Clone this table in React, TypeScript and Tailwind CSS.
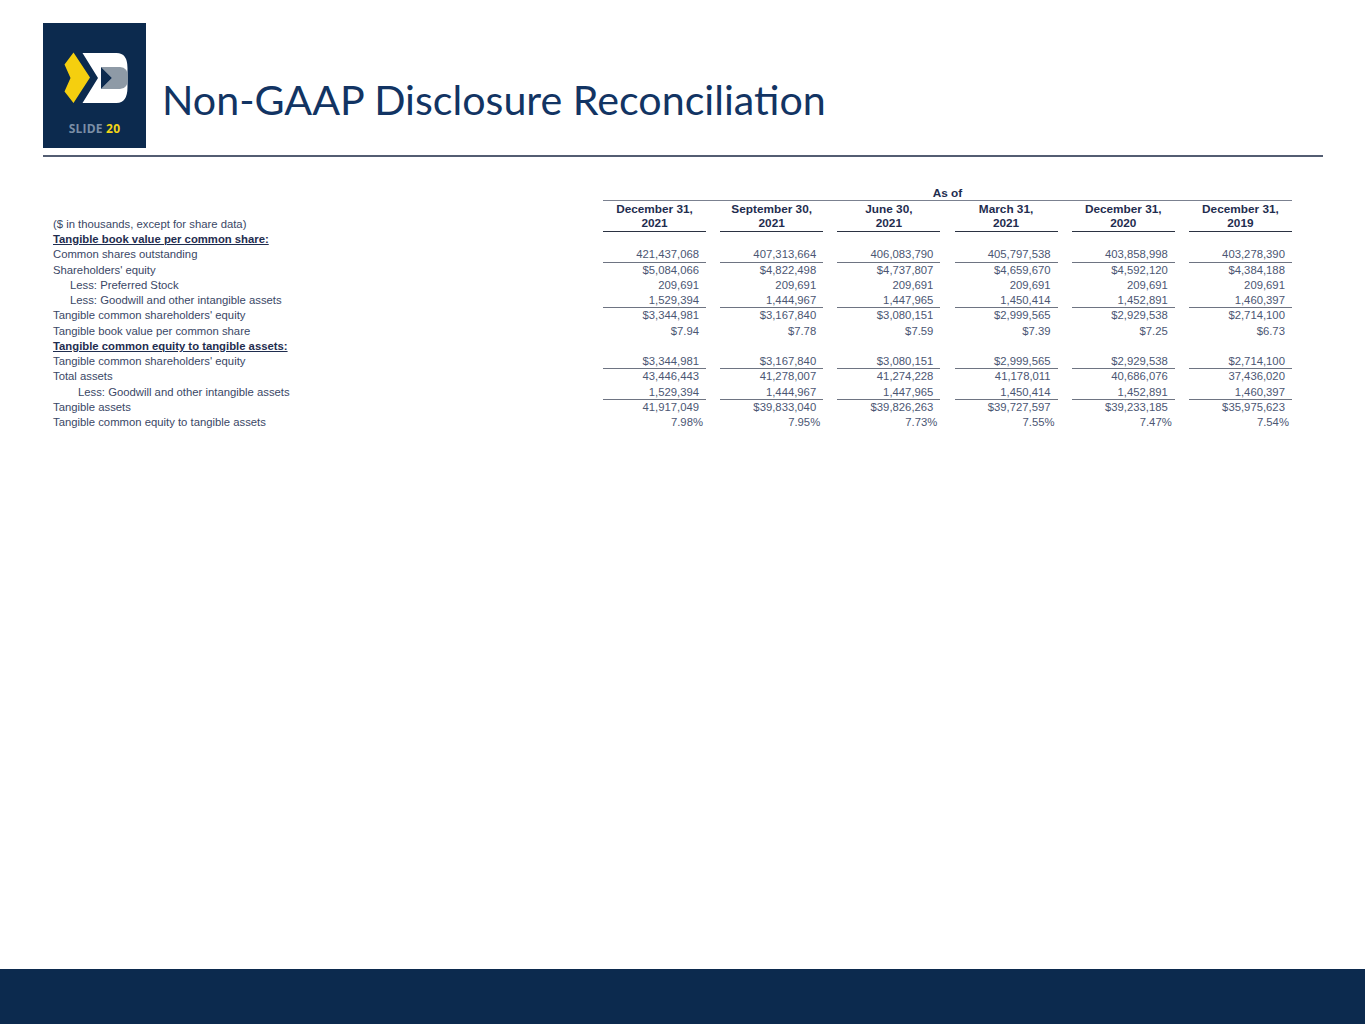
const cols = [
  ['December 31,', '2021'],
  ['September 30,', '2021'],
  ['June 30,', '2021'],
  ['March 31,', '2021'],
  ['December 31,', '2020'],
  ['December 31,', '2019'],
];

type Row = {
  label: string;
  indent?: 0 | 1 | 2;
  heading?: boolean;
  values?: string[];
  border?: boolean;
  pct?: boolean;
};

const rows: Row[] = [
  { label: 'Tangible book value per common share:', heading: true },
  {
    label: 'Common shares outstanding',
    values: ['421,437,068', '407,313,664', '406,083,790', '405,797,538', '403,858,998', '403,278,390'],
    border: true,
  },
  {
    label: "Shareholders' equity",
    values: ['$5,084,066', '$4,822,498', '$4,737,807', '$4,659,670', '$4,592,120', '$4,384,188'],
  },
  {
    label: 'Less: Preferred Stock',
    indent: 1,
    values: ['209,691', '209,691', '209,691', '209,691', '209,691', '209,691'],
  },
  {
    label: 'Less: Goodwill and other intangible assets',
    indent: 1,
    values: ['1,529,394', '1,444,967', '1,447,965', '1,450,414', '1,452,891', '1,460,397'],
    border: true,
  },
  {
    label: "Tangible common shareholders' equity",
    values: ['$3,344,981', '$3,167,840', '$3,080,151', '$2,999,565', '$2,929,538', '$2,714,100'],
  },
  {
    label: 'Tangible book value per common share',
    values: ['$7.94', '$7.78', '$7.59', '$7.39', '$7.25', '$6.73'],
  },
  { label: 'Tangible common equity to tangible assets:', heading: true },
  {
    label: "Tangible common shareholders' equity",
    values: ['$3,344,981', '$3,167,840', '$3,080,151', '$2,999,565', '$2,929,538', '$2,714,100'],
    border: true,
  },
  {
    label: 'Total assets',
    values: ['43,446,443', '41,278,007', '41,274,228', '41,178,011', '40,686,076', '37,436,020'],
  },
  {
    label: 'Less: Goodwill and other intangible assets',
    indent: 2,
    values: ['1,529,394', '1,444,967', '1,447,965', '1,450,414', '1,452,891', '1,460,397'],
    border: true,
  },
  {
    label: 'Tangible assets',
    values: ['41,917,049', '$39,833,040', '$39,826,263', '$39,727,597', '$39,233,185', '$35,975,623'],
  },
  {
    label: 'Tangible common equity to tangible assets',
    values: ['7.98%', '7.95%', '7.73%', '7.55%', '7.47%', '7.54%'],
    pct: true,
  },
];

function Logo() {
  return (
    <div className="relative w-[103px] h-[125px] bg-[#0c2a4e] shrink-0">
      <svg viewBox="0 0 103 125" className="absolute inset-0 w-full h-full">
        <polygon points="30.5,29.5 47,54.5 30.5,80 21.5,68.5 27.5,55 21.5,41.5" fill="#f5cf0f" />
        <path d="M39.5,30 L73.5,30 Q84.5,30 84.5,45 L84.5,64 Q84.5,80 73.5,80 L39.5,80 L55,55 Z" fill="#ffffff" />
        <path d="M58,44 L77,44 Q85,44 85,55 Q85,66 77,66 L58,66 L69,55 Z" fill="#8e9aa6" />
        <polygon points="58,44 69,55 58,66" fill="#0c2a4e" />
      </svg>
      <div className="absolute left-0 right-0 top-[97px] text-center text-[12px] font-bold font-['Open_Sans',sans-serif] tracking-[0.2px]">
        <span className="text-[#7a8ea6]">SLIDE </span>
        <span className="text-[#f2d516]">20</span>
      </div>
    </div>
  );
}

function Cells({ children }: { children: React.ReactNode }) {
  return <div className="flex gap-[14.2px]">{children}</div>;
}

export default function App() {
  return (
    <div className="h-screen w-full bg-white flex flex-col font-['Liberation_Sans',Arial,sans-serif]">
      {/* header */}
      <div className="px-[43px] pt-[23px]">
        <div className="flex items-start gap-[16px]">
          <Logo />
          <h1 className="mt-[56px] text-[41.2px] leading-none text-[#123463] font-['Lato',sans-serif]">
            Non-GAAP Disclosure Reconciliation
          </h1>
        </div>
        <div className="mt-[7px] h-[2px] w-[1280px] bg-[#535d72]" />
      </div>

      {/* table */}
      <div className="pl-[53px] mt-[29px] text-[11.3px] leading-[15.25px]">
        <div className="flex h-[15.25px]">
          <div className="w-[550px]" />
          <div className="w-[689px] text-center border-b border-[#7b8190] text-[11.8px] font-semibold text-[#1f2d4f]">
            As of
          </div>
        </div>
        <div className="flex">
          <div className="w-[550px] flex items-end">
            <span className="text-[#3a4766] h-[15.25px]">($ in thousands, except for share data)</span>
          </div>
          <Cells>
            {cols.map((c, i) => (
              <div
                key={i}
                className="w-[103px] text-center border-b border-[#2b3242] text-[11.8px] font-semibold text-[#1f2d4f] leading-[14.6px] pt-[0.6px]"
              >
                <div>{c[0]}</div>
                <div>{c[1]}</div>
              </div>
            ))}
          </Cells>
        </div>

        {rows.map((r, i) => (
          <div key={i} className="flex h-[15.25px]">
            <div
              className={
                'w-[550px] whitespace-nowrap ' +
                (r.heading ? 'font-bold underline text-[#1f2d4f] ' : 'text-[#3a4766] ') +
                (r.indent === 1 ? 'pl-[17px]' : r.indent === 2 ? 'pl-[25px]' : '')
              }
            >
              {r.label}
            </div>
            {r.values && (
              <Cells>
                {r.values.map((v, j) => (
                  <div
                    key={j}
                    className={
                      'w-[103px] h-[15.25px] text-right text-[#4b5673] ' +
                      (r.pct ? 'pr-[3px] ' : 'pr-[7px] ') +
                      (r.border ? 'border-b border-[#6e7482]' : '')
                    }
                  >
                    {v}
                  </div>
                ))}
              </Cells>
            )}
          </div>
        ))}
      </div>

      {/* footer */}
      <div className="mt-auto h-[55px] bg-[#0c2a4e]" />
    </div>
  );
}
